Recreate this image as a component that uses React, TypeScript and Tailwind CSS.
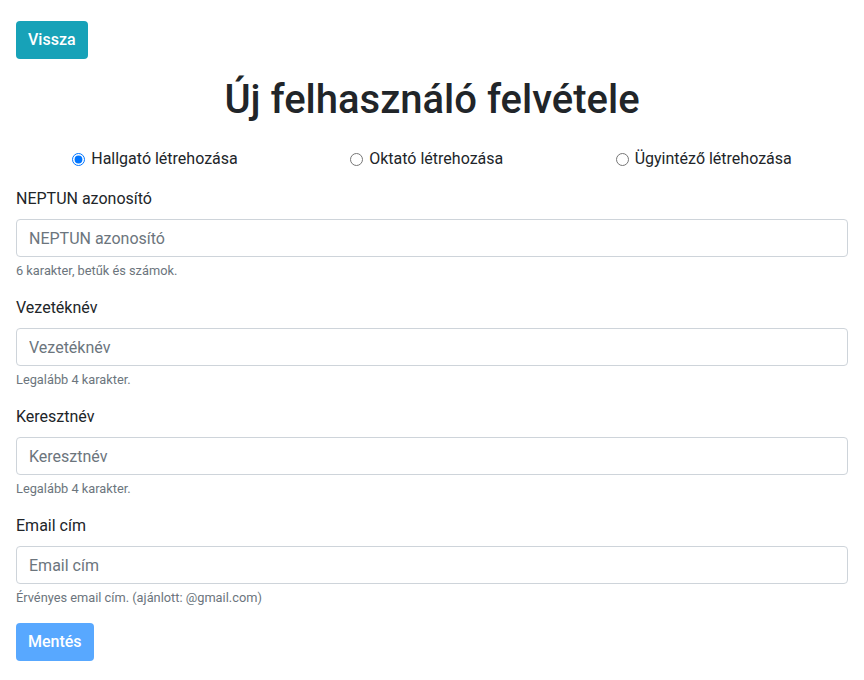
import { useState } from 'react'

const fields = [
  { label: 'NEPTUN azonosító', type: 'text', hint: '6 karakter, betűk és számok.' },
  { label: 'Vezetéknév', type: 'text', hint: 'Legalább 4 karakter.' },
  { label: 'Keresztnév', type: 'text', hint: 'Legalább 4 karakter.' },
  { label: 'Email cím', type: 'email', hint: 'Érvényes email cím. (ajánlott: @gmail.com)' },
]

const roles = ['Hallgató létrehozása', 'Oktató létrehozása', 'Ügyintéző létrehozása']

function App() {
  const [role, setRole] = useState(0)

  return (
    <div className="px-4 pt-[21px] text-[#212529] bg-white min-h-screen" style={{ fontFamily: 'Roboto, "Liberation Sans", sans-serif' }}>
      <button type="button" className="h-[38px] px-3 rounded bg-[#17a2b8] text-white text-base leading-6 font-medium">
        Vissza
      </button>
      <h1 className="mt-[17px] mb-2 text-center text-[40px] leading-[48px] font-medium">Új felhasználó felvétele</h1>
      <div className="flex justify-around mt-[23px] mb-4">
        {roles.map((r, i) => (
          <label key={r} className="flex items-center text-base leading-6">
            <input
              type="radio"
              name="role"
              checked={role === i}
              onChange={() => setRole(i)}
              className="w-[13px] h-[13px] mr-[6px] accent-[#0075ff]"
            />
            {r}
          </label>
        ))}
      </div>
      <form>
        {fields.map((f) => (
          <div key={f.label} className="mb-4">
            <label className="block mb-2 text-base leading-6">{f.label}</label>
            <input
              type={f.type}
              placeholder={f.label}
              className="block w-full h-[38px] px-3 border border-[#ced4da] rounded text-base text-[#495057] placeholder:text-[#6c757d] outline-none"
            />
            <small className="block mt-1 text-[12.8px] leading-[19px] text-[#6c757d]">{f.hint}</small>
          </div>
        ))}
        <button type="button" disabled className="h-[38px] px-3 rounded bg-[#007bff] opacity-65 text-white text-base leading-6 font-medium">
          Mentés
        </button>
      </form>
    </div>
  )
}

export default App
